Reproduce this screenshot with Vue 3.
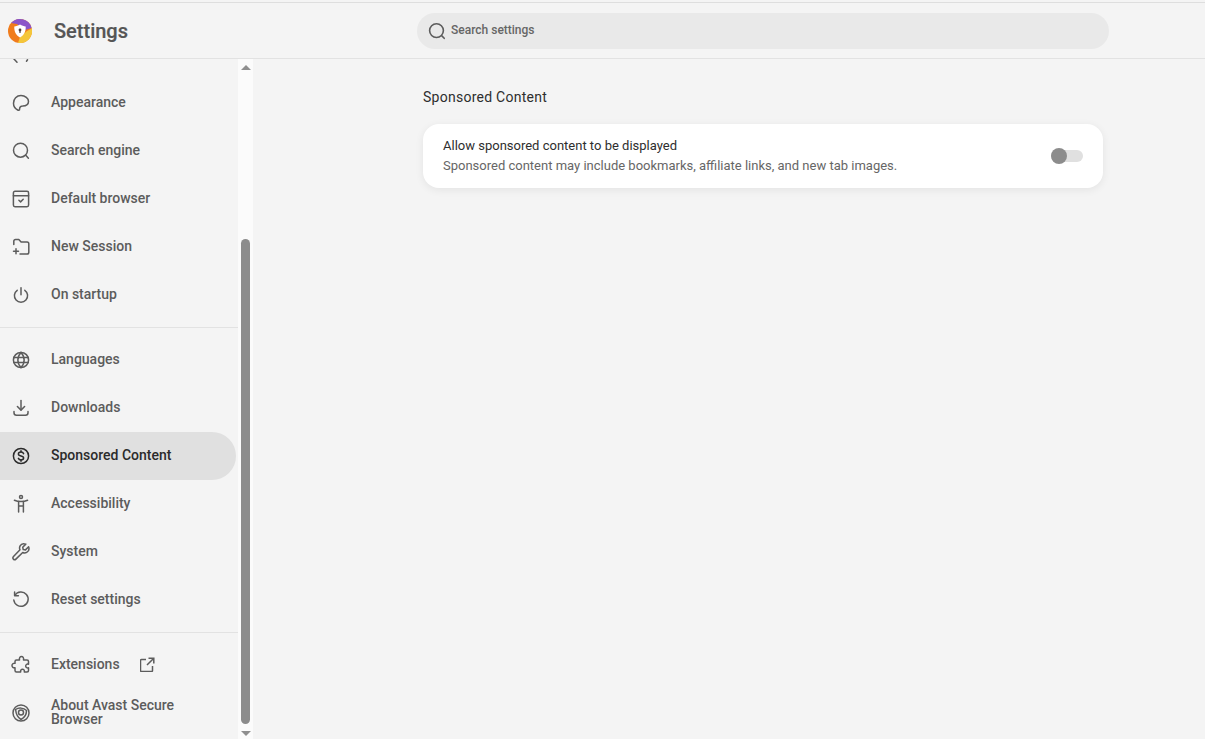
<script setup>
const groupA = [
  { label: 'Appearance', icon: 'appearance' },
  { label: 'Search engine', icon: 'search' },
  { label: 'Default browser', icon: 'browser' },
  { label: 'New Session', icon: 'session' },
  { label: 'On startup', icon: 'power' },
]
const groupB = [
  { label: 'Languages', icon: 'globe' },
  { label: 'Downloads', icon: 'download' },
  { label: 'Sponsored Content', icon: 'dollar', active: true },
  { label: 'Accessibility', icon: 'access' },
  { label: 'System', icon: 'wrench' },
  { label: 'Reset settings', icon: 'reset' },
]
const paths = {
  appearance: ['M10 2.600C5.600 2.600 2.500 6 2.500 10.200c0 3 1.800 5.500 4.200 6.800 1.100.6 2 .2 1.900-1-.1-1.800 1.100-2.800 3-2.900 3.600-.3 5.900-2 5.900-4.700C17.500 5.400 14.200 2.600 10 2.600z'],
  search: ['M9.500 2.200a7 7 0 1 0 0 14 7 7 0 0 0 0-14z', 'M14.800 14.200l2.600 3'],
  browser: ['M4 2.300h12a1.600 1.600 0 0 1 1.600 1.600v12.200a1.600 1.600 0 0 1-1.600 1.600H4a1.600 1.600 0 0 1-1.600-1.600V3.900A1.600 1.600 0 0 1 4 2.300z', 'M2.400 6.700h15.200', 'M7.900 11.300l1.700 1.600 2.600-2.600'],
  session: ['M2.800 7.500V4.200c0-1 .7-1.700 1.700-1.700h3.300l2.300 2.500h6c1 0 1.700.8 1.700 1.800v8.400c0 1-.7 1.800-1.700 1.800H9', 'M5 11.800v5M2.500 14.300h5'],
  power: ['M10 2.800v7', 'M6.200 5.300a6.600 6.600 0 1 0 7.600 0'],
  globe: ['M10 2.400a7.600 7.600 0 1 0 0 15.200 7.600 7.600 0 0 0 0-15.200z', 'M10 2.400c-4.200 4.500-4.200 10.700 0 15.200M10 2.400c4.200 4.500 4.200 10.700 0 15.200', 'M2.800 7.600h14.400M2.800 12.400h14.400'],
  download: ['M10 2.600v9.200', 'M6.400 8.500l3.600 3.600 3.600-3.600', 'M3 13.500v1.300c0 1.500 1.100 2.500 2.500 2.500h9c1.400 0 2.500-1 2.500-2.500v-1.300'],
  dollar: ['M10 2.400a7.600 7.600 0 1 0 0 15.200 7.600 7.600 0 0 0 0-15.200z', 'M12.600 7.600C12.200 6.600 11.200 6 10 6 8.500 6 7.400 6.800 7.400 8s1.100 1.700 2.600 2c1.500.3 2.600.9 2.600 2.100S11.500 14 10 14c-1.200 0-2.200-.6-2.600-1.600', 'M10 4.700V6M10 14v1.300'],
  access: ['M10 1.500a1.500 1.500 0 1 0 0 3 1.500 1.500 0 0 0 0-3z', 'M3.400 6.200c2 .9 4.200 1.300 6.600 1.300s4.600-.4 6.600-1.300', 'M7.600 7.500v10.500M12.400 7.500v10.500M7.600 12h4.800'],
  wrench: ['M17.600 4.800l-3.100 3.100-2.300-.4-.5-2.300 3.100-3.100c-2.300-.8-4.700-.2-5.700 1.700-.7 1.300-.7 2.800-.1 4L2.500 14.600c-.8.900-.8 1.800-.1 2.500.8.800 1.700.8 2.500 0l6.800-6.600c1.200.6 2.700.6 4-.1 1.900-1 2.700-3.400 1.900-5.600z'],
  reset: ['M3.900 5.200A7.200 7.200 0 1 1 2.800 10', 'M3.600 1.900v3.800h3.800'],
  puzzle: ['M5.500 5h3c-.5-2.200.7-3.500 2-3.500s2.500 1.300 2 3.500h3.500c.9 0 1.500.6 1.500 1.500v2.700c-1.800-.4-2.800.6-2.800 1.800s1 2.200 2.800 1.800v2.700c0 .9-.6 1.500-1.500 1.500h-2.700c.4-1.800-.6-2.800-1.800-2.800s-2.200 1-1.800 2.800H5.500c-.9 0-1.500-.6-1.500-1.500v-2.700C2.200 13 1 12 1 10.500S2.200 8 4 8.300V6.500C4 5.600 4.600 5 5.500 5z'],
  chrome: ['M10 2a8 8 0 1 0 0 16 8 8 0 0 0 0-16z', 'M4.600 6.500C7.500 4.500 12.500 4.500 15.500 7.500 15.500 12 13 15 10 16.500 7.500 15 5 11 4.600 6.500z', 'M10 7a2.500 2.500 0 1 0 0 5 2.500 2.500 0 0 0 0-5z'],
}
</script>

<template>
  <div class="page">
    <header class="topbar">
      <div class="brand">
        <svg class="logo" viewBox="0 0 24 24" width="24" height="24">
          <circle cx="12" cy="12" r="12" fill="#f07c1c" />
          <path d="M3 4.100A12 12 0 0 1 23.600 9L17 11 9 5z" fill="#8a55c9" />
          <path d="M23.800 9.500A12 12 0 0 1 10 23.900L12 18l7-6z" fill="#f4c63a" />
          <path d="M12 5.600c1.900 1.200 3.800 1.700 5.700 1.800.2 4.800-1.500 8.900-5.700 11-4.200-2.100-5.900-6.200-5.700-11 1.900-.1 3.800-.6 5.700-1.800z" fill="#fff" />
          <circle cx="12" cy="11" r="1.400" fill="#4b3b3b" />
          <rect x="11.400" y="11" width="1.200" height="3" fill="#4b3b3b" />
        </svg>
        <h1 class="title">Settings</h1>
      </div>
      <div class="search">
        <svg class="search-icon" viewBox="0 0 20 20" width="20" height="20">
          <path d="M9.500 2.700a6.900 6.900 0 1 0 0 13.800 6.900 6.900 0 0 0 0-13.800z M14.600 14.600l2.600 2.700" />
        </svg>
        <span class="search-text">Search settings</span>
      </div>
    </header>

    <div class="body">
      <nav class="nav">
        <div class="clipped-row">
          <svg class="icon" viewBox="0 0 20 20" width="20" height="20">
            <path d="M1 11.500L3 14l3 3.200M16.500 14.800l-1 1.400" />
          </svg>
        </div>
        <a v-for="item in groupA" :key="item.label" class="row">
          <svg class="icon" viewBox="0 0 20 20" width="20" height="20">
            <path v-for="d in paths[item.icon]" :key="d" :d="d" />
          </svg>
          <span class="label">{{ item.label }}</span>
        </a>
        <hr class="rule" />
        <a v-for="item in groupB" :key="item.label" class="row" :class="{ active: item.active }">
          <svg class="icon" viewBox="0 0 20 20" width="20" height="20">
            <path v-for="d in paths[item.icon]" :key="d" :d="d" />
          </svg>
          <span class="label">{{ item.label }}</span>
        </a>
        <hr class="rule" />
        <a class="row">
          <svg class="icon" viewBox="0 0 20 20" width="20" height="20">
            <path v-for="d in paths.puzzle" :key="d" :d="d" />
          </svg>
          <span class="label">Extensions</span>
          <svg class="ext" viewBox="1 0 15 15" width="15" height="15">
            <path d="M7 2.500H2.500a1 1 0 0 0-1 1v10a1 1 0 0 0 1 1h10a1 1 0 0 0 1-1V9" />
            <path d="M9.500 1.200h5.300v5.300M14.800 1.200L8 8" />
          </svg>
        </a>
        <a class="row">
          <svg class="icon" viewBox="0 0 20 20" width="20" height="20">
            <path v-for="d in paths.chrome" :key="d" :d="d" />
          </svg>
          <span class="label two-line">About Avast Secure Browser</span>
        </a>
      </nav>

      <div class="scrollbar">
        <i class="arrow up"></i>
        <div class="track"><div class="thumb"></div></div>
        <i class="arrow down"></i>
      </div>

      <main class="main">
        <h2 class="section">Sponsored Content</h2>
        <section class="card">
          <div class="card-text">
            <div class="card-title">Allow sponsored content to be displayed</div>
            <div class="card-sub">Sponsored content may include bookmarks, affiliate links, and new tab images.</div>
          </div>
          <div class="toggle"><span class="knob"></span></div>
        </section>
      </main>
    </div>
  </div>
</template>

<style>
html, body { margin: 0; background: #f4f4f4; }
</style>

<style scoped>
.page {
  width: 1205px;
  height: 739px;
  overflow: hidden;
  background: #f4f4f4;
  font-family: Roboto, "Liberation Sans", sans-serif;
  color: #5c5c5c;
  display: flex;
  flex-direction: column;
}
.topbar {
  height: 55px;
  flex: none;
  margin-top: 2px;
  border-top: 1px solid #dedede;
  border-bottom: 1px solid #e2e2e2;
  display: flex;
  align-items: center;
}
.brand {
  width: 417px;
  flex: none;
  display: flex;
  align-items: center;
  padding-left: 8px;
  box-sizing: border-box;
}
.logo { flex: none; }
.title {
  margin: 0 0 0 22px;
  font-size: 20px;
  font-weight: 500;
  color: #555;
  -webkit-text-stroke: .2px #555;
}
.search {
  width: 692px;
  height: 36px;
  border-radius: 18px;
  background: #e9e9e9;
  display: flex;
  align-items: center;
  padding-left: 10px;
  box-sizing: border-box;
  gap: 4px;
}
.search-icon { fill: none; stroke: #5c5c5c; stroke-width: 1.600; stroke-linecap: round; }
.search-text { font-size: 12px; font-weight: 500; color: #666; padding-bottom: 2px; }
.body {
  flex: 1;
  display: flex;
  min-height: 0;
}
.nav {
  width: 238px;
  flex: none;
  overflow: hidden;
  background: #f4f4f4;
}
.clipped-row {
  height: 48px;
  margin-top: -28px;
  padding-left: 11px;
  display: flex;
  align-items: center;
}
.row {
  height: 48px;
  width: 236px;
  box-sizing: border-box;
  padding-left: 11px;
  display: flex;
  align-items: center;
  gap: 20px;
  font-size: 14px;
  font-weight: 500;
  color: #5c5c5c;
  border-radius: 0 24px 24px 0;
}
.label { padding-bottom: 2px; }
.row.active {
  background: #e0e0e0;
  color: #2b2b2b;
}
.icon { flex: none; fill: none; stroke: #5c5c5c; stroke-width: 1.500; stroke-linecap: round; stroke-linejoin: round; }
.row.active .icon { stroke: #2b2b2b; }
.ext {
  flex: none;
  fill: none;
  stroke: #5c5c5c;
  stroke-width: 1.500;
  margin-top: -1px;
}
.two-line { width: 140px; line-height: 14px; }
.rule {
  margin: 8px 0;
  height: 1px;
  border: 0;
  background: #e2e2e2;
}
.scrollbar {
  width: 15px;
  flex: none;
  background: #fbfbfb;
  display: flex;
  flex-direction: column;
  align-items: center;
}
.arrow {
  flex: none;
  width: 0;
  height: 0;
  border-left: 5px solid transparent;
  border-right: 5px solid transparent;
}
.arrow.up { border-bottom: 5px solid #8f8f8f; margin-top: 6px; }
.arrow.down { border-top: 5px solid #8f8f8f; margin-bottom: 3px; }
.track { flex: 1; width: 9px; min-height: 0; }
.thumb {
  margin-top: 169px;
  height: 485px;
  width: 9px;
  border-radius: 5px;
  background: #8c8c8c;
}
.main {
  flex: 1;
  padding: 28px 0 0 170px;
  min-width: 0;
}
.section {
  margin: 0;
  font-size: 14px;
  line-height: 20px;
  font-weight: 400;
  letter-spacing: .26px;
  color: #2e2e2e;
}
.card {
  margin-top: 17px;
  width: 680px;
  height: 64px;
  box-sizing: border-box;
  padding: 0 20px;
  background: #fff;
  border-radius: 16px;
  box-shadow: 0 2px 8px rgba(0, 0, 0, .07);
  display: flex;
  align-items: center;
  justify-content: space-between;
}
.card-title { font-size: 13px; line-height: 20px; color: #2e2e2e; }
.card-sub { font-size: 13px; line-height: 20px; color: #666; }
.toggle {
  position: relative;
  width: 32px;
  height: 12px;
  border-radius: 6px;
  background: #e0e0e0;
}
.knob {
  position: absolute;
  left: 0;
  top: -2px;
  width: 16px;
  height: 16px;
  border-radius: 50%;
  background: #8c8c8c;
}
</style>
